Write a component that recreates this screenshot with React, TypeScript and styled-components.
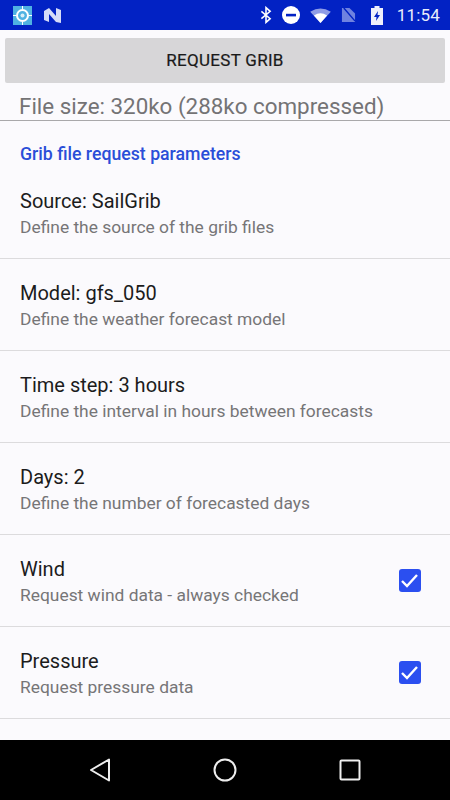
import styled, { createGlobalStyle } from 'styled-components';

const GlobalStyle = createGlobalStyle`
  html, body {
    margin: 0;
    padding: 0;
    background: #fbfafd;
    font-family: Roboto, "Liberation Sans", sans-serif;
  }
`;

const Screen = styled.div`
  width: 450px;
  height: 800px;
  display: flex;
  flex-direction: column;
  overflow: hidden;
  background: #fbfafd;
`;

const StatusBar = styled.div`
  height: 30px;
  flex: none;
  display: flex;
  align-items: center;
  padding: 0 10px 0 13px;
  background: #0222c4;
  color: #e8ecfb;
`;

const StatusLeft = styled.div`
  display: flex;
  align-items: center;
  gap: 11px;
`;

const StatusRight = styled.div`
  margin-left: auto;
  display: flex;
  align-items: center;
  gap: 10px;
`;

const BatteryIcon = styled.svg`
  margin-left: 5px;
`;

const Clock = styled.span`
  font-size: 17px;
  margin-left: 4px;
  letter-spacing: 0.2px;
`;

const Content = styled.div`
  flex: 1;
  min-height: 0;
  display: flex;
  flex-direction: column;
`;

const RequestButton = styled.button`
  height: 45px;
  margin: 8px 5px 0;
  padding: 0 0 1px;
  flex: none;
  border: none;
  border-radius: 2px;
  background: #d7d6d8;
  color: #1a1a1a;
  font-family: Roboto, "Liberation Sans", sans-serif;
  font-size: 17px;
  font-weight: 400;
  letter-spacing: 0.3px;
  -webkit-text-stroke: 0.2px #1a1a1a;
`;

const FileSize = styled.div`
  height: 38px;
  flex: none;
  box-sizing: border-box;
  padding: 10px 0 0 19px;
  border-bottom: 1px solid #a9a8aa;
  font-size: 22.4px;
  line-height: 26px;
  color: #747375;
`;

const SectionTitle = styled.div`
  height: 46px;
  flex: none;
  box-sizing: border-box;
  padding: 23px 20px 0;
  font-size: 17.7px;
  line-height: 21px;
  font-weight: 500;
  color: #2a4ed8;
`;

const Row = styled.div`
  height: 92px;
  flex: none;
  box-sizing: border-box;
  display: flex;
  align-items: center;
  padding: 2px 20px 0;
  border-bottom: 1px solid #dcdbdd;
`;

const RowText = styled.div`
  flex: 1;
  min-width: 0;
`;

const RowTitle = styled.div`
  font-size: 20px;
  line-height: 26px;
  color: #1c1c1c;
`;

const RowSummary = styled.div`
  font-size: 17.4px;
  line-height: 26px;
  color: #767577;
`;

const Checkbox = styled.div`
  width: 22.5px;
  height: 22.5px;
  flex: none;
  margin: -2px 9px 0 0;
  border-radius: 3px;
  background: #2b4ff0;
  display: flex;
  align-items: center;
  justify-content: center;
`;

const NavBar = styled.div`
  height: 60px;
  flex: none;
  display: flex;
  align-items: center;
  justify-content: center;
  gap: 102px;
  padding-right: 2px;
  background: #000;
`;

const rows = [
  { title: 'Source: SailGrib', summary: 'Define the source of the grib files' },
  { title: 'Model: gfs_050', summary: 'Define the weather forecast model' },
  { title: 'Time step: 3 hours', summary: 'Define the interval in hours between forecasts' },
  { title: 'Days: 2', summary: 'Define the number of forecasted days' },
  { title: 'Wind', summary: 'Request wind data - always checked', checked: true },
  { title: 'Pressure', summary: 'Request pressure data', checked: true },
];

function App() {
  return (
    <Screen>
      <GlobalStyle />
      <StatusBar>
        <StatusLeft>
          <svg width="19" height="19" viewBox="0 0 19 19">
            <rect width="19" height="19" fill="#4fb2e2" />
            <circle cx="9.5" cy="9.5" r="5.5" fill="none" stroke="#fff" strokeWidth="2" />
            <circle cx="9.5" cy="9.5" r="2" fill="#d8eef8" />
            <path d="M9.5 0v3M9.5 16v3M0 9.5h3M16 9.5h3" stroke="#fff" strokeWidth="1" />
          </svg>
          <svg width="19" height="17" viewBox="0 0 19 17">
            <path d="M1 4L6 1L13 9V1L18 3V16L13 15L6 7V15L1 13Z" fill="#d5dcf8" />
          </svg>
        </StatusLeft>
        <StatusRight>
          <svg width="12" height="18" viewBox="0 0 13 18">
            <path d="M1.5 5L11 13L6.5 17V1L11 5L1.5 13" fill="none" stroke="#fff" strokeWidth="1.7" />
          </svg>
          <svg width="18" height="18" viewBox="0 0 18 18">
            <circle cx="9" cy="9" r="9" fill="#fff" />
            <rect x="4" y="7.8" width="10" height="2.6" fill="#0222c4" />
          </svg>
          <svg width="21" height="15" viewBox="0 0 22 16">
            <path d="M0 4Q11 -3 22 4L11 16Z" fill="#8f9de6" />
            <path d="M4 8Q11 3 18 8L11 16Z" fill="#fff" />
          </svg>
          <svg width="15" height="16" viewBox="0 0 16 17">
            <path d="M1 1H9L15 7V16H1Z" fill="#6f82e0" />
            <path d="M3 1L15 15" stroke="#0222c4" strokeWidth="1.5" />
          </svg>
          <BatteryIcon width="12" height="19" viewBox="0 0 12 19">
            <path d="M3.5 0H8.5V2H12V19H0V2H3.5Z" fill="#eef0fc" />
            <path d="M7 5L3 11H5.5L5 15L9 9H6.5Z" fill="#0222c4" />
          </BatteryIcon>
          <Clock>11:54</Clock>
        </StatusRight>
      </StatusBar>
      <Content>
        <RequestButton>REQUEST GRIB</RequestButton>
        <FileSize>File size: 320ko (288ko compressed)</FileSize>
        <SectionTitle>Grib file request parameters</SectionTitle>
        {rows.map((row) => (
          <Row key={row.title}>
            <RowText>
              <RowTitle>{row.title}</RowTitle>
              <RowSummary>{row.summary}</RowSummary>
            </RowText>
            {row.checked && (
              <Checkbox>
                <svg width="19" height="15" viewBox="0 0 19 15">
                  <path d="M2 8L7 13L17 2" fill="none" stroke="#fff" strokeWidth="2.4" />
                </svg>
              </Checkbox>
            )}
          </Row>
        ))}
      </Content>
      <NavBar>
        <svg width="24" height="26" viewBox="0 0 24 26">
          <path d="M22 2.5V23.5L4 13Z" fill="none" stroke="#eee" strokeWidth="2" strokeLinejoin="round" />
        </svg>
        <svg width="24" height="24" viewBox="0 0 24 24">
          <circle cx="12" cy="12" r="10.5" fill="none" stroke="#eee" strokeWidth="2" />
        </svg>
        <svg width="22" height="22" viewBox="0 0 22 22">
          <rect x="1.5" y="1.5" width="19" height="19" rx="1" fill="none" stroke="#eee" strokeWidth="2" />
        </svg>
      </NavBar>
    </Screen>
  );
}

export default App;
